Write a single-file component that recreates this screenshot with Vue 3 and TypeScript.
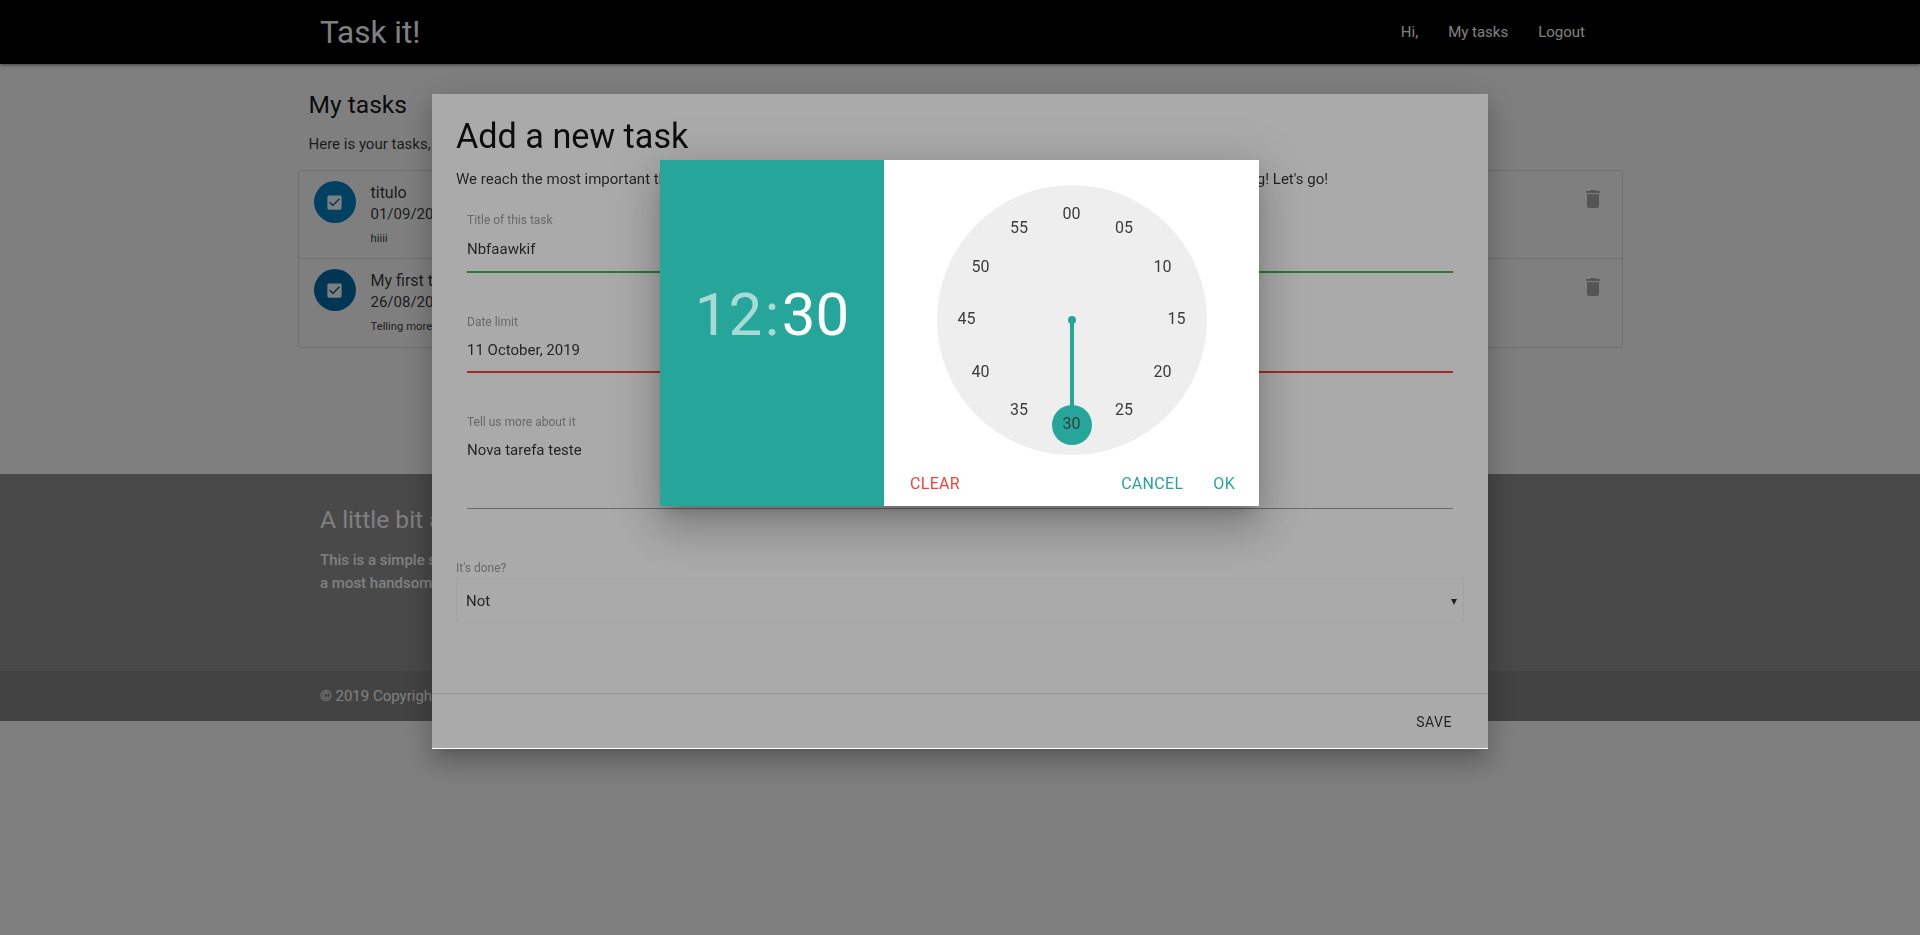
<script setup lang="ts">
const tasks = [
  { title: 'titulo', date: '01/09/2019', text: 'hiiii', tone: 'one' },
  { title: 'My first task', date: '26/08/2019', text: 'Telling more about it', tone: 'two' },
]
const ticks = ['00', '05', '10', '15', '20', '25', '30', '35', '40', '45', '50', '55'].map((label, i) => {
  const angle = (i * Math.PI) / 6
  return {
    label,
    left: 135 + 105 * Math.sin(angle) - 20 + 'px',
    top: 135 - 105 * Math.cos(angle) - 21 + 'px',
  }
})
</script>

<template>
  <div class="page">
    <nav class="nav">
      <div class="nav-inner">
        <a class="logo">Task it!</a>
        <ul class="nav-links">
          <li>Hi,</li>
          <li>My tasks</li>
          <li>Logout</li>
        </ul>
      </div>
    </nav>

    <main class="main">
      <h2 class="heading">My tasks</h2>
      <p class="lead">Here is your tasks, all of them are listed below</p>
      <ul class="collection">
        <li v-for="task in tasks" :key="task.title" class="item">
          <span class="avatar" :class="task.tone">
            <svg viewBox="0 0 24 24" width="19" height="19">
              <path fill="#fff" d="M19 3H5c-1.11 0-2 .9-2 2v14c0 1.1.89 2 2 2h14c1.11 0 2-.9 2-2V5c0-1.1-.89-2-2-2zm-9 14l-5-5 1.41-1.41L10 14.17l7.59-7.59L19 8l-9 9z" />
            </svg>
          </span>
          <div class="item-body">
            <div class="item-title">{{ task.title }}</div>
            <div class="item-date">{{ task.date }}</div>
            <div class="item-text">{{ task.text }}</div>
          </div>
          <svg class="trash" viewBox="0 0 24 24" width="24" height="24">
            <path fill="#aaa" d="M6 19c0 1.1.9 2 2 2h8c1.1 0 2-.9 2-2V7H6v12zM19 4h-3.5l-1-1h-5l-1 1H5v2h14V4z" />
          </svg>
        </li>
      </ul>
    </main>

    <footer class="footer">
      <div class="footer-main">
        <h5 class="footer-title">A little bit about this app</h5>
        <p class="footer-text">This is a simple system to organize your tasks<br />a most handsome way to get things done</p>
      </div>
      <div class="footer-copy">© 2019 Copyright Task it!</div>
    </footer>

    <div class="backdrop"></div>

    <section class="modal">
      <div class="modal-content">
        <h4 class="modal-title">Add a new task</h4>
        <p class="modal-lead">We reach the most important things when we write down, so tell us what you are planning for this month and keep moving! Let's go!</p>

        <div class="field title-field">
          <label class="field-label">Title of this task</label>
          <div class="field-value">Nbfaawkif</div>
          <div class="line valid"></div>
        </div>
        <div class="field date-field">
          <label class="field-label">Date limit</label>
          <div class="field-value">11 October, 2019</div>
          <div class="line invalid"></div>
        </div>
        <div class="field area-field">
          <label class="field-label">Tell us more about it</label>
          <div class="field-value area-value">Nova tarefa teste</div>
          <div class="line"></div>
        </div>

        <label class="select-label">It's done?</label>
        <div class="select">
          <span>Not</span>
          <span class="caret">▾</span>
        </div>
      </div>
      <div class="modal-footer">
        <span class="save">SAVE</span>
      </div>

      <div class="modal-shade"></div>

      <div class="picker">
        <div class="picker-side">
          <span class="dim">12</span><span class="dim colon">:</span><span>30</span>
        </div>
        <div class="picker-main">
          <div class="dial">
            <svg class="hand" viewBox="0 0 270 270" width="270" height="270">
              <circle cx="135" cy="135" r="4" fill="#26a69a" />
              <line x1="135" y1="135" x2="135" y2="240" stroke="#26a69a" stroke-width="4" />
              <circle cx="135" cy="240" r="20" fill="#26a69a" />
            </svg>
            <span v-for="tick in ticks" :key="tick.label" class="tick" :style="{ left: tick.left, top: tick.top }">{{ tick.label }}</span>
          </div>
          <div class="picker-actions">
            <span class="clear">CLEAR</span>
            <span class="spacer"></span>
            <span class="action">CANCEL</span>
            <span class="action ok">OK</span>
          </div>
        </div>
      </div>
    </section>
  </div>
</template>

<style>
html,
body {
  margin: 0;
  background: #fff;
}
</style>

<style scoped>
* {
  box-sizing: border-box;
}
.page {
  min-height: 935px;
  display: flex;
  flex-direction: column;
  font-family: Roboto, "Liberation Sans", sans-serif;
  font-size: 15px;
  color: rgba(0, 0, 0, 0.8);
  background: #fff;
}
.nav {
  height: 64px;
  background: #000;
  box-shadow: 0 2px 2px 0 rgba(0, 0, 0, 0.14), 0 3px 1px -2px rgba(0, 0, 0, 0.12), 0 1px 5px 0 rgba(0, 0, 0, 0.2);
}
.nav-inner {
  width: 1280px;
  height: 64px;
  margin: 0 auto;
  display: flex;
  align-items: center;
  justify-content: space-between;
  color: #fff;
}
.logo {
  font-size: 31.5px;
}
.nav-links {
  display: flex;
  list-style: none;
  margin: 0;
  padding: 0;
  font-size: 15px;
}
.nav-links li {
  padding: 0 15px;
}
.main {
  width: 1325px;
  margin: 0 auto;
  height: 410px;
  flex: none;
}
.heading {
  margin: 27px 0 0 11px;
  font-size: 24.6px;
  font-weight: 400;
  line-height: 28px;
  color: rgba(0, 0, 0, 0.92);
}
.lead {
  margin: 14px 0 0 11px;
  line-height: 22px;
}
.collection {
  list-style: none;
  margin: 15px 0 0;
  padding: 0;
  border: 1px solid #e0e0e0;
  border-radius: 2px;
}
.item {
  height: 88px;
  padding: 10px 17px 0 15px;
  display: flex;
  border-bottom: 1px solid #e0e0e0;
  background: #fff;
}
.item:last-child {
  border-bottom: none;
}
.avatar {
  flex: none;
  width: 42px;
  height: 42px;
  border-radius: 50%;
  display: flex;
  align-items: center;
  justify-content: center;
}
.avatar.one {
  background: #0080c0;
}
.avatar.two {
  background: #006ca8;
}
.item-body {
  flex: 1;
  margin-left: 15px;
  padding-top: 1px;
}
.item-title {
  line-height: 22px;
  font-size: 16px;
}
.item-date {
  line-height: 21px;
  font-size: 15px;
}
.item-text {
  margin-top: 6px;
  font-size: 11.25px;
  line-height: 16px;
}
.trash {
  margin-top: 6px;
}
.footer {
  background: #929292;
  color: #fff;
  height: 247px;
  flex: none;
  display: flex;
  flex-direction: column;
}
.footer-main {
  flex: 1;
  width: 1280px;
  margin: 0 auto;
}
.footer-title {
  margin: 30px 0 0;
  font-size: 24.6px;
  font-weight: 400;
  line-height: 32px;
}
.footer-text {
  margin: 13px 0 0;
  font-weight: 500;
  font-size: 15px;
  line-height: 22.5px;
}
.footer-copy {
  height: 50px;
  line-height: 50px;
  padding-left: 320px;
  font-size: 15px;
  background: #868686;
}
.backdrop {
  position: fixed;
  inset: 0;
  background: rgba(0, 0, 0, 0.5);
}
.modal {
  position: fixed;
  left: 432px;
  top: 94px;
  width: 1056px;
  height: 655px;
  background: #fff;
  display: flex;
  flex-direction: column;
  box-shadow: 0 16px 24px 2px rgba(0, 0, 0, 0.14), 0 6px 30px 5px rgba(0, 0, 0, 0.12), 0 8px 10px -7px rgba(0, 0, 0, 0.2);
}
.modal-content {
  flex: 1;
  padding: 25px 24px 24px;
}
.modal-title {
  margin: 0;
  font-size: 34.2px;
  font-weight: 400;
  line-height: 34px;
  color: rgba(0, 0, 0, 0.92);
}
.modal-lead {
  margin: 15px 0 0;
  line-height: 22px;
  font-size: 15px;
  white-space: nowrap;
}
.field {
  margin: 0 11px;
}
.title-field {
  margin-top: 22px;
}
.date-field {
  margin-top: 41px;
}
.area-field {
  margin-top: 41px;
}
.field-label {
  display: block;
  font-size: 12px;
  line-height: 16px;
  color: #9e9e9e;
}
.field-value {
  margin-top: 10px;
  line-height: 22px;
  font-size: 15px;
  height: 33px;
}
.date-field .field-value {
  margin-top: 9px;
  height: 32px;
}
.area-field .field-value {
  margin-top: 9px;
}
.area-value {
  height: 69px;
}
.line {
  height: 1px;
  background: #9e9e9e;
}
.line.valid {
  height: 2px;
  background: #4caf50;
}
.line.invalid {
  height: 2px;
  background: #f44336;
}
.select-label {
  display: block;
  margin-top: 51px;
  font-size: 12px;
  line-height: 16px;
  color: #9e9e9e;
}
.select {
  margin-top: 2px;
  height: 45px;
  padding: 0 6px 0 9px;
  border: 1px solid #f5f5f5;
  border-radius: 2px;
  display: flex;
  align-items: center;
  justify-content: space-between;
}
.caret {
  font-size: 12px;
}
.modal-footer {
  flex: none;
  height: 56px;
  border-top: 1px solid #e0e0e0;
  display: flex;
  align-items: center;
  justify-content: flex-end;
  padding: 0 36px;
}
.save {
  font-size: 14px;
  letter-spacing: 0.5px;
}
.modal-shade {
  position: absolute;
  inset: 0 0 1px 0;
  background: rgba(0, 0, 0, 0.333);
}
.picker {
  position: absolute;
  left: 228px;
  top: 66px;
  width: 599px;
  height: 346px;
  display: flex;
  background: #fff;
  box-shadow: 0 24px 38px 3px rgba(0, 0, 0, 0.14), 0 9px 46px 8px rgba(0, 0, 0, 0.12), 0 11px 15px -7px rgba(0, 0, 0, 0.2);
}
.picker-side {
  flex: none;
  width: 224px;
  background: #26a69a;
  color: #fff;
  font-size: 60px;
  display: flex;
  align-items: center;
  justify-content: center;
  padding-bottom: 37px;
}
.dim {
  color: rgba(255, 255, 255, 0.6);
}
.colon {
  margin: 0 2.5px;
}
.picker-main {
  flex: 1;
  display: flex;
  flex-direction: column;
  align-items: stretch;
}
.dial {
  position: relative;
  width: 270px;
  height: 270px;
  margin: 25px auto 0;
  border-radius: 50%;
  background: #eee;
  flex: none;
}
.hand {
  position: absolute;
  inset: 0;
}
.tick {
  position: absolute;
  width: 40px;
  height: 40px;
  line-height: 40px;
  text-align: center;
  font-size: 16px;
  color: #3c3c3c;
}
.picker-actions {
  display: flex;
  align-items: center;
  padding: 0 24px 0 26px;
  margin-top: 10px;
  height: 36px;
  font-size: 16px;
  letter-spacing: 0.3px;
}
.spacer {
  flex: 1;
}
.clear {
  color: #f44336;
}
.action {
  color: #26a69a;
}
.ok {
  margin-left: 30px;
}
</style>
